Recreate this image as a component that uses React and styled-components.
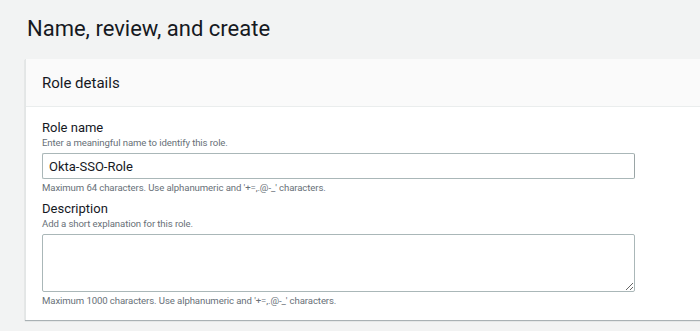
import React from 'react';
import styled, { createGlobalStyle } from 'styled-components';

const Global = createGlobalStyle`
  html, body {
    margin: 0;
    padding: 0;
    background: #f2f3f3;
    font-family: Roboto, 'Noto Sans', sans-serif;
    color: #16191f;
  }
`;

const Page = styled.div`
  width: 700px;
  height: 331px;
  overflow: hidden;
  padding: 14px 0 0 25px;
  box-sizing: border-box;
`;

const Title = styled.h1`
  margin: 0 0 0 2px;
  font-size: 22px;
  font-weight: 400;
  line-height: 30px;
`;

const Card = styled.div`
  margin-top: 15px;
  width: 700px;
  background: #fff;
  border-left: 1px solid #e3e6e6;
  box-shadow: 0 1px 1px 0 rgba(0, 28, 36, 0.3);
`;

const CardHeader = styled.div`
  background: #fafafa;
  border-bottom: 1px solid #eaeded;
  height: 47px;
  padding: 0 16px;
  display: flex;
  align-items: center;
  font-size: 15px;
`;

const CardBody = styled.div`
  padding: 12px 16px 12px 16px;
  display: flex;
  flex-direction: column;
`;

const Field = styled.div`
  display: flex;
  flex-direction: column;
  & + & {
    margin-top: 5px;
  }
`;

const Label = styled.div`
  font-size: 13px;
  line-height: 17px;
  color: #16191f;
`;

const Hint = styled.div`
  font-size: 9.6px;
  letter-spacing: -0.1px;
  line-height: 14px;
  color: #687078;
`;

const Constraint = styled(Hint)`
  margin-top: 2px;
`;

const Input = styled.div`
  width: 593px;
  height: 26px;
  box-sizing: border-box;
  margin-top: 3px;
  border: 1px solid #aab7b8;
  border-right-color: #9aa5a6;
  border-radius: 2px;
  padding: 0 6px;
  display: flex;
  align-items: center;
  font-size: 13px;
  background: #fff;
`;

const TextArea = styled.textarea`
  width: 593px;
  height: 58px;
  box-sizing: border-box;
  margin: 3px 0 0 0;
  border: 1px solid #aab7b8;
  border-radius: 2px;
  display: block;
  font-family: inherit;
  background: #fff;
`;

export default function App() {
  return (
    <Page>
      <Global />
      <Title>Name, review, and create</Title>
      <Card>
        <CardHeader>Role details</CardHeader>
        <CardBody>
          <Field>
            <Label>Role name</Label>
            <Hint>Enter a meaningful name to identify this role.</Hint>
            <Input>Okta-SSO-Role</Input>
            <Constraint>Maximum 64 characters. Use alphanumeric and '+=,.@-_' characters.</Constraint>
          </Field>
          <Field>
            <Label>Description</Label>
            <Hint>Add a short explanation for this role.</Hint>
            <TextArea />
            <Constraint>Maximum 1000 characters. Use alphanumeric and '+=,.@-_' characters.</Constraint>
          </Field>
        </CardBody>
      </Card>
    </Page>
  );
}
